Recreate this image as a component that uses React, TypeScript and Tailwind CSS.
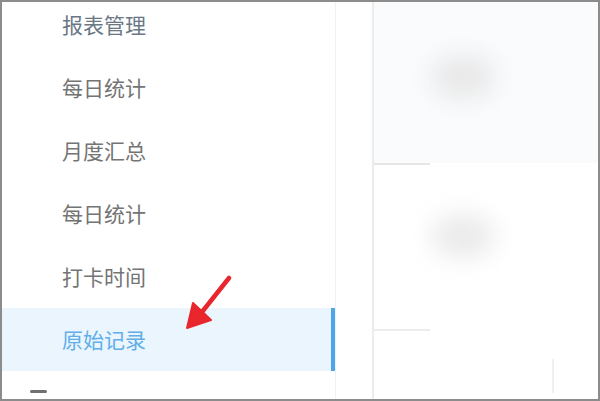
import React from 'react';

const items = [
    { label: '报表管理', tone: 'text-[#6a7886]' },
    { label: '每日统计', tone: 'text-[#747474]' },
    { label: '月度汇总', tone: 'text-[#747474]' },
    { label: '每日统计', tone: 'text-[#747474]' },
    { label: '打卡时间', tone: 'text-[#747474]' },
    { label: '原始记录', tone: 'text-[#62aeea]', active: true },
];

function Arrow() {
    return (
        <svg className="absolute left-[178px] top-[268px]" width="60" height="64" viewBox="0 0 60 64">
            <path d="M49 8 L18 47" stroke="#e8262c" strokeWidth="4.5" strokeLinecap="round" fill="none" />
            <path d="M7 58 L13 33 L31 50 Z" fill="#e8262c" stroke="#e8262c" strokeWidth="2" strokeLinejoin="round" />
        </svg>
    );
}

export default function App() {
    return (
        <div
            className="relative flex w-[600px] h-[401px] overflow-hidden border-2 border-[#8c8c8c] bg-white"
            style={{ fontFamily: '"Noto Sans CJK SC", "Noto Sans", sans-serif' }}
        >
            <aside className="w-[334px] shrink-0 border-r border-[#eff1f3]">
                <ul className="-mt-[9px]">
                    {items.map((item, i) => (
                        <li
                            key={i}
                            className={`flex h-[63px] items-center pl-[60px] text-[21px] leading-none ${item.tone} ${
                                item.active ? 'bg-[#eaf5fd] shadow-[inset_-4px_0_0_#4ba6ea]' : ''
                            }`}
                        >
                            {item.label}
                        </li>
                    ))}
                </ul>
                <div className="ml-[28px] mt-[19px] h-[3px] w-[17px] rounded-sm bg-[#707070]" />
            </aside>

            <div className="w-[36px] shrink-0" />

            <main className="flex flex-1 flex-col border-l-2 border-[#ececec]">
                <section className="relative h-[161px] bg-[#f9fbfd] pl-[58px] pt-[54px]">
                    <div className="h-[42px] w-[62px] rounded-full bg-[#e8e8e8] blur-md" />
                </section>
                <div className="h-[2px] w-[56px] bg-[#e6e6e6]" />
                <section className="h-[164px] pl-[58px] pt-[50px]">
                    <div className="h-[42px] w-[62px] rounded-full bg-[#eaeaea] blur-md" />
                </section>
                <div className="h-[2px] w-[56px] bg-[#ececec]" />
                <section className="flex-1 pt-[28px]">
                    <div className="ml-[178px] h-[34px] w-[2px] bg-[#f0f0f0]" />
                </section>
            </main>

            <Arrow />
        </div>
    );
}
